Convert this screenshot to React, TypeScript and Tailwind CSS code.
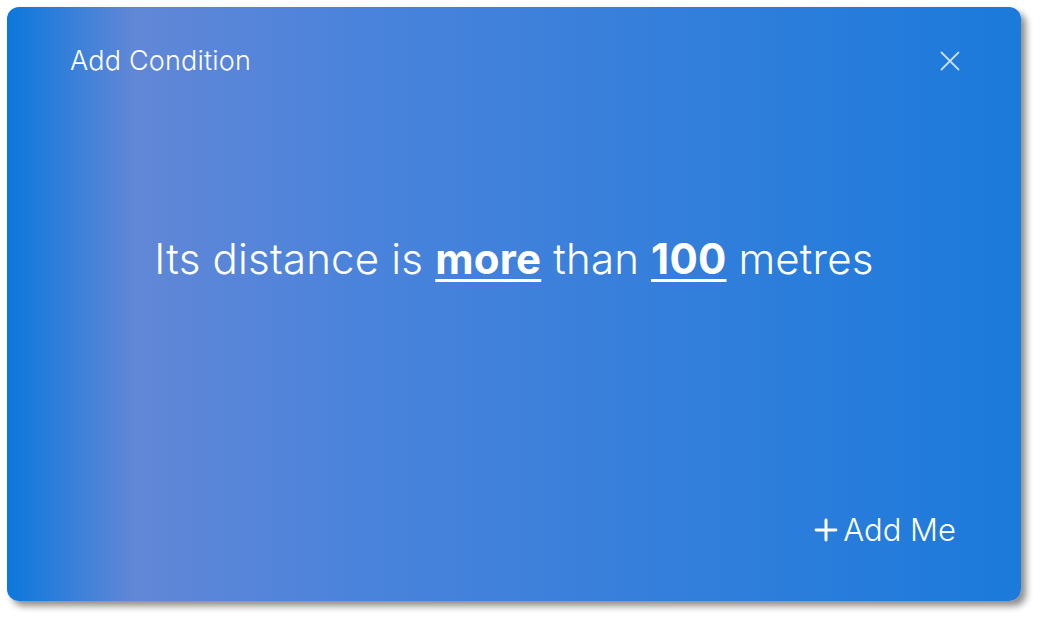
import React from 'react';
import { X, Plus } from 'lucide-react';

const App = () => {
  return (
    <div className="w-[1045px] h-[625px] bg-white pt-[7px] pl-[7px]" style={{ fontFamily: 'Inter, "Noto Sans", sans-serif' }}>
      <div className="w-[1014px] h-[594px] rounded-[12px] flex flex-col text-white shadow-[5px_5px_7px_rgba(0,0,0,0.45)] bg-[linear-gradient(to_right,#0b78dc_0%,#6287d7_12.5%,#4a83db_35%,#1b7adb_100%)]">
        <div className="flex items-center justify-between pl-[63px] pr-[54px] pt-[34px]">
          <span className="text-[27px] font-light tracking-[0.2px]">Add Condition</span>
          <X className="w-[34px] h-[34px] text-[#c8dcf3]" strokeWidth={1.3} />
        </div>

        <div className="flex-1 flex items-start justify-center pt-[145px]">
          <p className="text-[42px] font-light tracking-[0.2px]">
            Its distance is{' '}
            <span className="font-bold underline decoration-[3px] underline-offset-[5px]">more</span>{' '}
            than{' '}
            <span className="font-bold underline decoration-[3px] underline-offset-[5px]">100</span>{' '}
            metres
          </p>
        </div>

        <div className="flex justify-end pr-[65px] pb-[48px]">
          <button className="flex items-center gap-0 text-[31px] font-light">
            <Plus className="w-[34px] h-[34px]" strokeWidth={2.1} />
            <span>Add Me</span>
          </button>
        </div>
      </div>
    </div>
  );
};

export default App;
